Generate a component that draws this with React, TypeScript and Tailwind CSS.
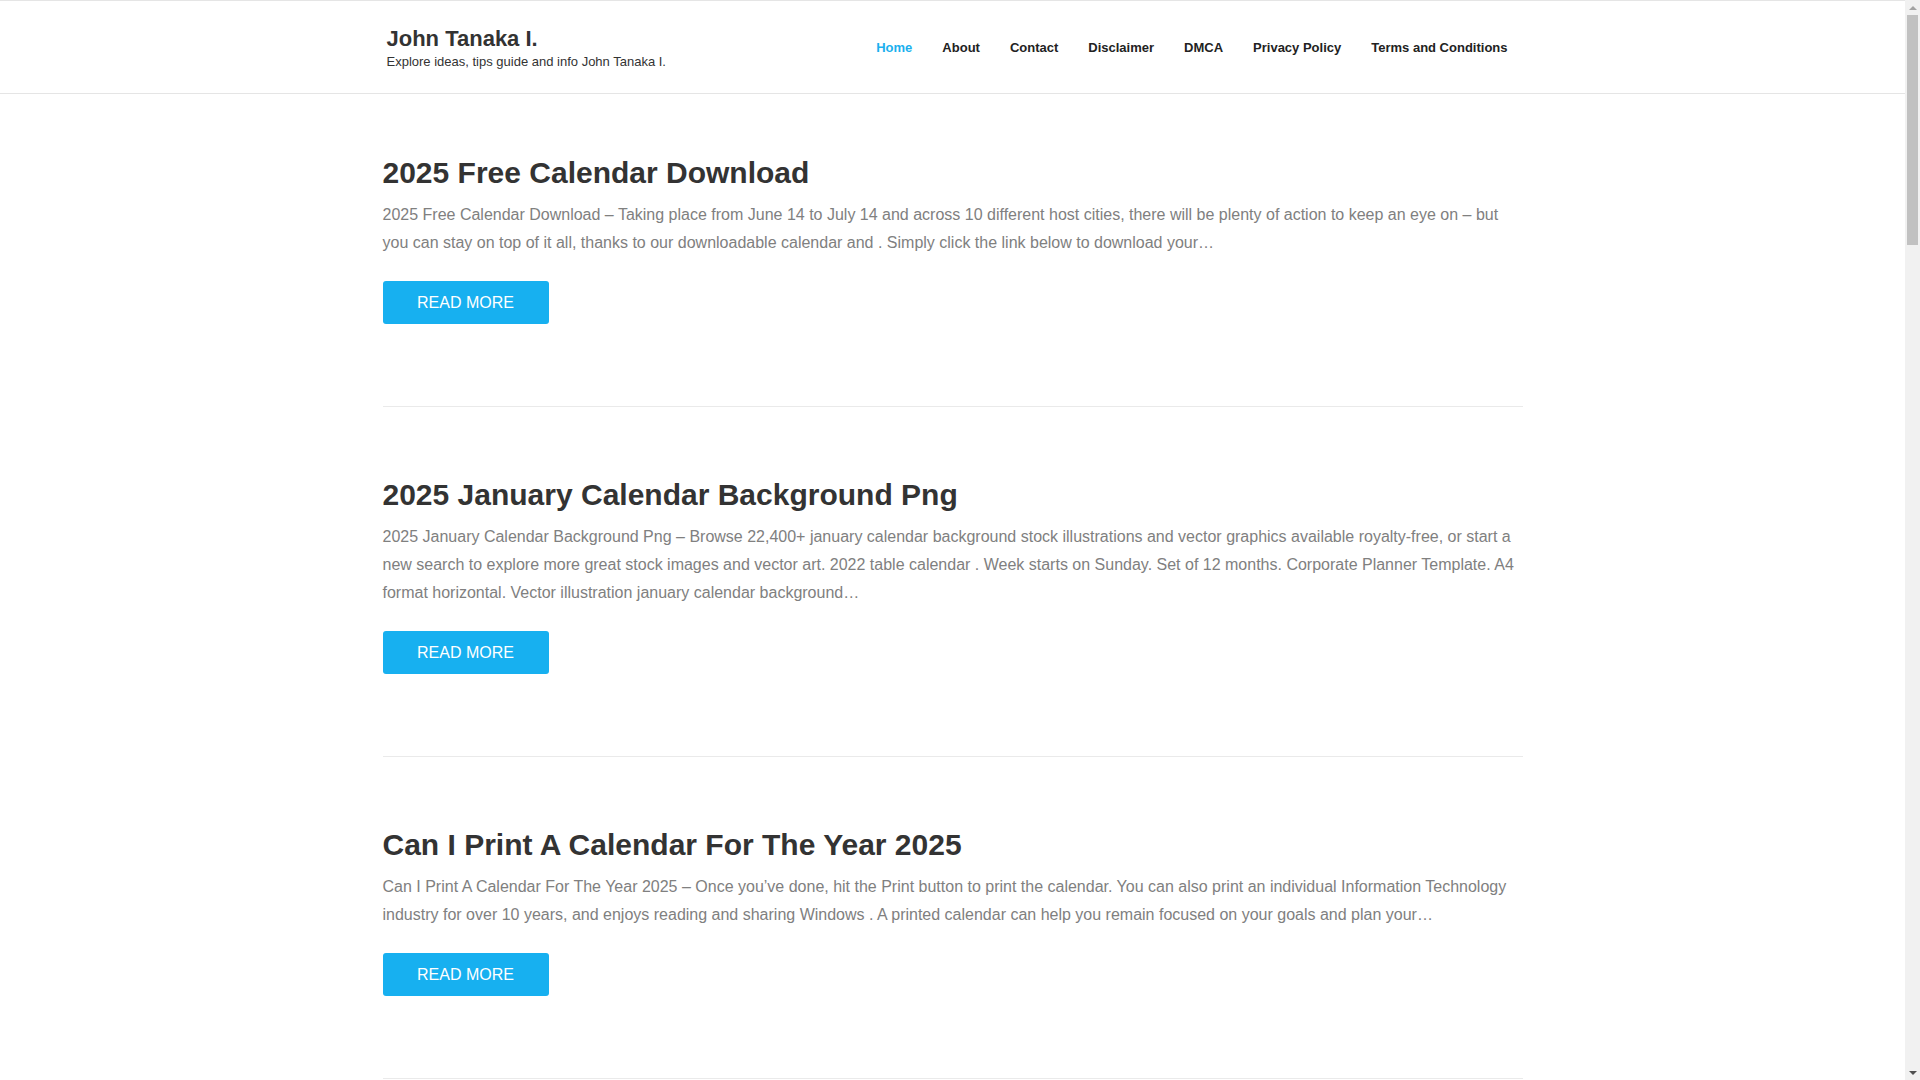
import React from "react";

const navItems = ["Home", "About", "Contact", "Disclaimer", "DMCA", "Privacy Policy", "Terms and Conditions"];

const posts = [
  {
    title: "2025 Free Calendar Download",
    excerpt:
      "2025 Free Calendar Download – Taking place from June 14 to July 14 and across 10 different host cities, there will be plenty of action to keep an eye on – but you can stay on top of it all, thanks to our downloadable calendar and . Simply click the link below to download your…",
  },
  {
    title: "2025 January Calendar Background Png",
    excerpt:
      "2025 January Calendar Background Png – Browse 22,400+ january calendar background stock illustrations and vector graphics available royalty-free, or start a new search to explore more great stock images and vector art. 2022 table calendar . Week starts on Sunday. Set of 12 months. Corporate Planner Template. A4 format horizontal. Vector illustration january calendar background…",
  },
  {
    title: "Can I Print A Calendar For The Year 2025",
    excerpt:
      "Can I Print A Calendar For The Year 2025 – Once you’ve done, hit the Print button to print the calendar. You can also print an individual Information Technology industry for over 10 years, and enjoys reading and sharing Windows . A printed calendar can help you remain focused on your goals and plan your…",
  },
  {
    title: "2025 Calendar With Holidays Printable",
    excerpt:
      "2025 Calendar With Holidays Printable – Keep track of every public holiday, school break and observance with a clean monthly layout. Print it on letter or A4 paper and pin it to your wall, fridge or desk so the important dates are always in view…",
  },
];

function Scrollbar() {
  return (
    <div className="w-[15px] h-full bg-[#f1f1f1] flex flex-col items-center shrink-0">
      <div className="h-[15px] w-full flex items-center justify-center">
        <div className="w-0 h-0 border-l-[4px] border-r-[4px] border-b-[4px] border-l-transparent border-r-transparent border-b-[#a3a3a3]" />
      </div>
      <div className="w-[11px] h-[230px] bg-[#c1c1c1]" />
      <div className="flex-1" />
      <div className="h-[15px] w-full flex items-center justify-center">
        <div className="w-0 h-0 border-l-[4px] border-r-[4px] border-t-[4px] border-l-transparent border-r-transparent border-t-[#505050]" />
      </div>
    </div>
  );
}

export default function App() {
  return (
    <div className="h-screen flex bg-white font-['Liberation_Sans',Arial,sans-serif] overflow-hidden">
      <div className="flex-1 overflow-hidden">
        {/* Header */}
        <header className="border-t border-b border-[#e5e5e5]">
          <div className="w-[1140px] mx-auto h-[92px] flex items-center justify-between">
            <div className="pl-1 pt-[2px]">
              <p className="text-[22px] leading-[26px] font-bold text-[#333]">John Tanaka I.</p>
              <p className="text-[13px] leading-[18px] mt-[1px] text-[#333]">Explore ideas, tips guide and info John Tanaka I.</p>
            </div>
            <nav className="flex items-center pt-[1px]">
              {navItems.map((item, i) => (
                <a
                  key={item}
                  href="#"
                  className={`px-[15px] text-[13px] font-bold leading-[20px] ${i === 0 ? "text-[#1bb0ee]" : "text-[#222]"}`}
                >
                  {item}
                </a>
              ))}
            </nav>
          </div>
        </header>

        {/* Posts */}
        <main className="w-[1140px] mx-auto pt-[61px] pb-20">
          {posts.map((post, i) => (
            <article key={post.title} className={`${i === 0 ? "" : "pt-[70px]"} pb-[82px] border-b border-[#eaeaea]`}>
              <h2 className="text-[30px] leading-[36px] font-bold text-[#333]">{post.title}</h2>
              <p className="mt-[10px] text-[16px] leading-[28px] text-[#808080]">{post.excerpt}</p>
              <a
                href="#"
                className="mt-6 inline-flex items-center justify-center w-[166px] h-[43px] rounded-[3px] bg-[#17b0f0] text-white text-[16px]"
              >
                READ MORE
              </a>
            </article>
          ))}
        </main>
      </div>
      <Scrollbar />
    </div>
  );
}
